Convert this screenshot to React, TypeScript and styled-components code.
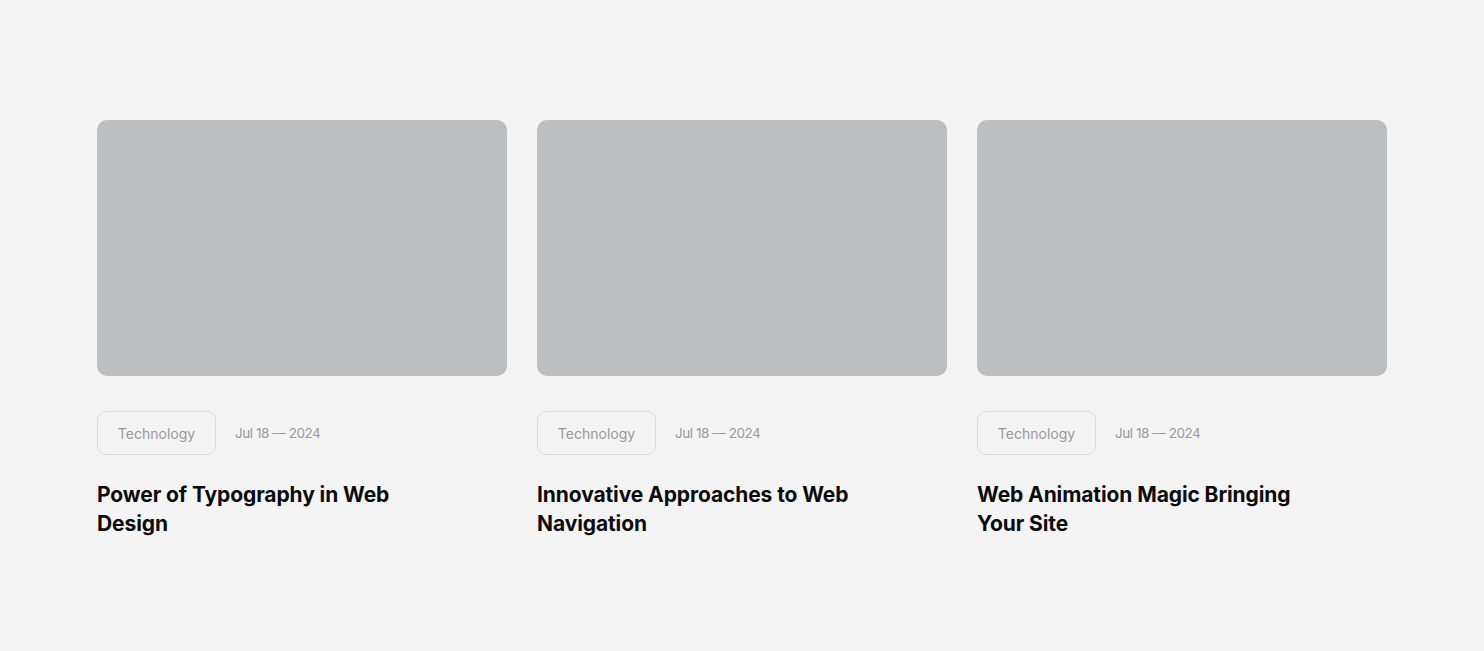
import React from "react";
import styled, { createGlobalStyle } from "styled-components";

const GlobalStyle = createGlobalStyle`
  html, body {
    margin: 0;
    padding: 0;
    background: #f4f4f4;
    font-family: "Inter", "Liberation Sans", sans-serif;
  }
`;

const Section = styled.section`
  min-height: 651px;
  box-sizing: border-box;
  padding: 120px 97px 0;
`;

const Grid = styled.div`
  display: grid;
  grid-template-columns: repeat(3, 410px);
  column-gap: 30px;
`;

const Card = styled.article`
  display: flex;
  flex-direction: column;
`;

const Thumb = styled.div`
  height: 256px;
  border-radius: 10px;
  background: #bdbebf;
`;

const Meta = styled.div`
  display: flex;
  align-items: center;
  gap: 19px;
  margin-top: 35px;
`;

const Tag = styled.span`
  box-sizing: border-box;
  width: 119px;
  height: 44px;
  display: flex;
  align-items: center;
  justify-content: center;
  border: 1px solid #dcdcdc;
  border-radius: 9px;
  font-size: 14px;
  color: #9a9a9a;
`;

const DateText = styled.span`
  font-size: 13.5px;
  color: #9a9a9a;
  letter-spacing: -0.45px;
`;

const Title = styled.h3`
  margin: 25px 0 0;
  max-width: 345px;
  font-size: 21px;
  font-weight: 700;
  line-height: 29px;
  letter-spacing: -0.1px;
  color: #0b0b0b;
`;

const posts = [
  { title: "Power of Typography in Web Design" },
  { title: "Innovative Approaches to Web Navigation" },
  { title: "Web Animation Magic Bringing Your Site" },
];

export default function App() {
  return (
    <>
      <GlobalStyle />
      <Section>
        <Grid>
          {posts.map((p) => (
            <Card key={p.title}>
              <Thumb />
              <Meta>
                <Tag>Technology</Tag>
                <DateText>Jul 18 — 2024</DateText>
              </Meta>
              <Title>{p.title}</Title>
            </Card>
          ))}
        </Grid>
      </Section>
    </>
  );
}
